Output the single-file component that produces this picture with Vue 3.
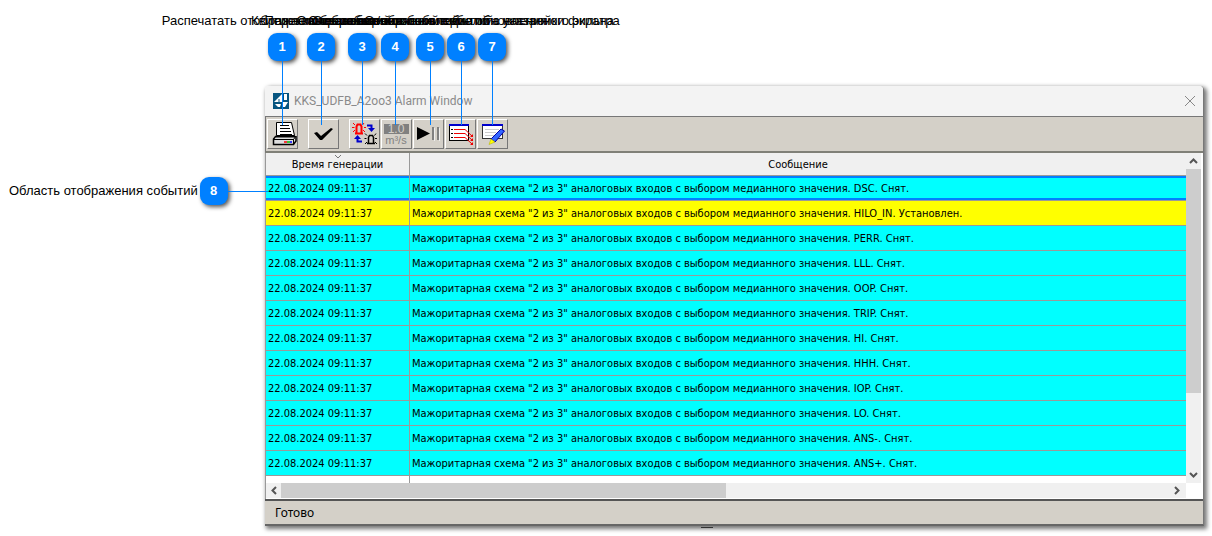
<script setup>
const message = 'Мажоритарная схема "2 из 3" аналоговых входов с выбором медианного значения. '
const events = [
  'DSC. Снят.', 'HILO_IN. Установлен.', 'PERR. Снят.', 'LLL. Снят.', 'OOP. Снят.', 'TRIP. Снят.',
  'HI. Снят.', 'HHH. Снят.', 'IOP. Снят.', 'LO. Снят.', 'ANS-. Снят.', 'ANS+. Снят.',
].map((tail, i) => ({ time: '22.08.2024 09:11:37', text: message + tail, active: i === 1, selected: i === 0 }))

const callouts = [
  { x: 282, text: 'Распечатать отображаемые сообщения' },
  { x: 321, text: 'Квитирование событий' },
  { x: 362, text: 'Переключение списков событий' },
  { x: 395, text: 'Отображение значений событий' },
  { x: 430, text: 'Остановка/возобновление обновления' },
  { x: 461, text: 'Отображение только событий с указанного экрана' },
  { x: 492, text: 'Отображение диалога настройки фильтра' },
]
</script>

<template>
  <main class="page">
    <section class="window">
      <header class="title">
        <svg class="logo" width="16" height="16" viewBox="0 0 16 16">
          <rect width="16" height="16" fill="#075580" />
          <path d="M1 9L9 1V9ZM11 1H14V7H11ZM2 11H8L7 14H5ZM9 9H15L12 14H9Z" fill="#fff" />
          <path d="M6 9V6" stroke="#075580" />
        </svg>
        <h1>KKS_UDFB_A2oo3 Alarm Window</h1>
        <button class="close" aria-label="Закрыть">
          <svg width="12" height="12" viewBox="0 0 12 12"><path d="M1 1L11 11M11 1L1 11" stroke="#888" /></svg>
        </button>
      </header>

      <nav class="toolbar">
        <button class="tool" aria-label="Печать">
          <svg viewBox="0 0 31 30">
            <path d="M9.500 3.500H24.500L27.500 16.500H9.500Z" fill="#fff" stroke="#000" />
            <path d="M13 6.500H22M13 9.500H23M13 12.500H24M13 15.500H25" stroke="#000" />
            <path d="M9 17L6.500 20V25.500H26.500L29 22V17" fill="#ddd" stroke="#000" stroke-width="1.500" />
            <path d="M7 20.500H26.500L29 17M26.500 20V25" stroke="#000" fill="none" />
            <path d="M9 17.500H28" stroke="#000" stroke-width="2" />
            <path d="M17 23H20" stroke="#f00" stroke-width="1.500" /><path d="M20 23H23" stroke="#0b0" stroke-width="1.500" /><path d="M23 23H25" stroke="#00f" stroke-width="1.500" />
          </svg>
        </button>
        <button class="tool apart" aria-label="Квитировать">
          <svg viewBox="0 0 31 30"><path d="M6 14L9 13L13 17L23 9L25 10L14 21H12Z" fill="#000" /></svg>
        </button>
        <button class="tool apart" aria-label="Переключить список">
          <svg viewBox="0 0 31 30" fill="none">
            <path d="M7.500 14V7.500L8.500 5.500H11.500L12.500 7.500V14M6 14.500H14" stroke="#f00" stroke-width="2" />
            <path d="M4 4L6 6M15 4L13.500 6M3 8.500H5.500M15 8.500H17M4 13L6 11M16 13L14 11" stroke="#f00" />
            <path d="M19.500 24V18.500L20.500 16.500H23.500L24.500 18.500V24M18 24.500H26" stroke="#000" stroke-width="1.500" />
            <path d="M16 14.500L18 16.500M27 14.500L25.500 16.500M15.500 19.500H17.500M26 19.500H28M16 25L18 23M28 25L26 23" stroke="#000" />
            <path d="M18 6.500H22.500V10M8.500 19V22.500H13" stroke="#00c" stroke-width="2" />
            <path d="M19 9H26L22.500 13ZM5 20L8.500 16L12 20Z" fill="#00c" />
          </svg>
        </button>
        <button class="tool" aria-label="Значения">
          <svg viewBox="0 0 31 30">
            <rect x="3" y="5" width="25" height="10" fill="#808080" />
            <text x="15" y="14" class="num">1.0</text>
            <text x="15" y="25" class="unit">m³/s</text>
          </svg>
        </button>
        <button class="tool" aria-label="Пауза">
          <svg viewBox="0 0 31 30">
            <path d="M4 8L17 14.500L4 21Z" fill="#000" />
            <path d="M20 8V21M25 8V21" stroke="#808080" stroke-width="2" />
            <path d="M21.500 9V22M26.500 9V22" stroke="#eee" />
          </svg>
        </button>
        <button class="tool" aria-label="Настройка вывода">
          <svg viewBox="0 0 31 30">
            <rect x="4.500" y="5.500" width="19" height="16" fill="#fff" stroke="#000" />
            <path d="M4 6H24" stroke="#00c" stroke-width="2" />
            <path d="M6 10.500H8M6 14.500H8M6 18.500H8" stroke="#000" />
            <path d="M9 10.500H20L27 17M9 14.500H20L27 21M9 18.500H20L27 25" fill="none" stroke="#e00" />
            <path d="M28 15V18H25ZM28 19V22H25ZM28 23V26H25Z" fill="#e00" />
          </svg>
        </button>
        <button class="tool" aria-label="Настройка фильтра">
          <svg viewBox="0 0 31 30">
            <rect x="5.500" y="6.500" width="20" height="13" fill="#fff" stroke="#333" />
            <path d="M5 6H26" stroke="#00c" stroke-width="2" />
            <path d="M8 10.500H22M8 13.500H19M8 16.500H17" stroke="#ccc" />
            <path d="M24 10L27.500 12L18 23L14 20Z" fill="#36f" stroke="#00a" />
            <path d="M14 20L18 23L12 25.500Z" fill="#ff0" stroke="#aa0" stroke-width="0.500" />
          </svg>
        </button>
      </nav>

      <div class="view">
        <div class="grid">
          <table>
            <thead>
              <tr>
                <th class="time">
                  <svg class="sort" width="8" height="5" viewBox="0 0 8 5"><path d="M1 1L4 4L7 1" fill="none" stroke="#777" /></svg>
                  Время генерации
                </th>
                <th>Сообщение</th>
              </tr>
            </thead>
            <tbody>
              <tr v-for="e in events" :key="e.text" :class="{ active: e.active, selected: e.selected }">
                <td class="time">{{ e.time }}</td>
                <td>{{ e.text }}</td>
              </tr>
              <tr class="rest"><td class="time"></td><td></td></tr>
            </tbody>
          </table>
        </div>
        <div class="vbar">
          <svg width="15" height="16" viewBox="0 0 15 16"><path d="M4 10L7.500 6.500L11 10" class="chevron" /></svg>
          <div class="vtrack"><div class="vthumb"></div></div>
          <svg width="15" height="16" viewBox="0 0 15 16"><path d="M4 6L7.500 9.500L11 6" class="chevron" /></svg>
        </div>
        <div class="hbar">
          <svg width="15" height="15" viewBox="0 0 15 15"><path d="M10 4L6.500 7.500L10 11" class="chevron" /></svg>
          <div class="htrack"><div class="hthumb"></div></div>
          <svg width="16" height="15" viewBox="0 0 16 15"><path d="M5 4L8.500 7.500L5 11" class="chevron" /></svg>
        </div>
      </div>
      <footer class="status">Готово</footer>
    </section>

    <div v-for="(c, i) in callouts" :key="i" class="callout" :style="{ left: c.x + 'px' }">
      <span class="label">{{ c.text }}</span>
      <span class="badge">{{ i + 1 }}</span>
      <i class="stem"></i>
    </div>
    <div class="side">
      <span class="label">Область отображения событий</span>
      <span class="badge">8</span>
      <i class="lead"></i>
    </div>
    <i class="mark"></i>
  </main>
</template>

<style>
body { background: #fff; }
</style>

<style scoped>
.page {
  position: relative;
  padding: 86px 8px 11px 265px;
  font-family: "Liberation Sans", Arial, sans-serif;
  color: #000;
}
.window {
  border-right: 1px solid #777;
  border-bottom: 2px solid #666;
  box-shadow: 2px 2px 4px 1px #777;
  border-radius: 4px 4px 0 0;
}
.title {
  display: flex;
  align-items: center;
  height: 30px;
  padding: 0 7px 0 8px;
  background: #f3f3f3;
  border-radius: 4px 4px 0 0;
  box-sizing: border-box;
}
.title h1 {
  flex: 1;
  margin: 0 0 0 5px;
  font: 400 12px Roboto, "Noto Sans", sans-serif;
  color: #8a8a8a;
}
.close {
  padding: 0;
  border: 0;
  background: none;
  line-height: 0;
}
.toolbar {
  display: flex;
  gap: 1px;
  height: 37px;
  padding: 2px 1px;
  box-sizing: border-box;
  border-top: 1px solid #777;
  border-bottom: 2px solid #808078;
  border-left: 1px solid #777;
  background: #d4d0c8;
}
.tool {
  width: 31px;
  height: 30px;
  padding: 0;
  border: 1px solid;
  border-color: #fff #777 #777 #fff;
  background: #d4d0c8;
  line-height: 0;
}
.tool svg {
  width: 31px;
  height: 30px;
  margin: -1px;
}
.apart { margin-left: 9px; }
.num, .unit {
  font-family: "Liberation Sans", sans-serif;
  text-anchor: middle;
}
.num { font-size: 12px; fill: #d4d0c8; }
.unit { font-size: 11px; fill: #808080; }
.view {
  display: grid;
  grid-template-columns: 1fr 15px;
  padding: 0 2px 1px 0;
  border-left: 1px solid #999;
  background: #fff;
}
.grid { overflow: hidden; }
table {
  width: 100%;
  table-layout: fixed;
  border-collapse: separate;
  border-spacing: 0;
  font: 11px "DejaVu Sans Condensed", Tahoma, sans-serif;
}
th, td {
  height: 25px;
  padding: 2px 2px 0;
  box-sizing: border-box;
  border-bottom: 1px solid #999;
  line-height: 14px;
  white-space: nowrap;
  text-align: left;
}
th {
  position: relative;
  height: 23px;
  background: #f0f0f0;
  font-weight: 400;
  text-align: center;
}
.time {
  width: 144px;
  border-right: 1px solid #999;
}
.sort {
  position: absolute;
  top: 1px;
  left: 68px;
}
td { background: #0ff; }
.active td { background: #ff0; }
.selected td { box-shadow: inset 0 2px #0080ff, inset 0 -2px #0080ff; }
.rest td { height: 7px; padding: 0; border-bottom: 0; background: #fff; }
.vbar {
  display: flex;
  flex-direction: column;
  background: #f0f0f0;
}
.vtrack { flex: 1; }
.vthumb { height: 75%; background: #cdcdcd; }
.hbar {
  display: flex;
  height: 15px;
  background: #f0f0f0;
}
.htrack { flex: 1; }
.hthumb { width: 50%; height: 100%; background: #cdcdcd; }
.chevron { fill: none; stroke: #555; stroke-width: 2; }
.status {
  height: 23px;
  padding-left: 10px;
  border-top: 2px solid #555;
  background: #d4d0c8;
  font: 12px/24px "Noto Sans", sans-serif;
}
.callout {
  position: absolute;
  top: 13px;
  display: flex;
  flex-direction: column;
  align-items: center;
  width: 0;
}
.label {
  font-size: 13px;
  line-height: 16px;
  white-space: nowrap;
}
.badge {
  flex: none;
  width: 28px;
  height: 28px;
  border-radius: 9px;
  background: #0080ff;
  box-shadow: 2px 2px 4px #555;
  color: #fff;
  font-size: 13px;
  font-weight: 700;
  line-height: 28px;
  text-align: center;
}
.callout .badge { margin-top: 4px; }
.stem {
  flex: none;
  width: 1px;
  height: 64px;
  background: #0080ff;
}
.side {
  position: absolute;
  top: 177px;
  left: 9px;
  display: flex;
  align-items: center;
}
.side .badge { margin-left: 2px; }
.lead {
  width: 40px;
  height: 1px;
  background: #0080ff;
}
.mark {
  position: absolute;
  bottom: 9px;
  left: 701px;
  width: 12px;
  height: 1px;
  background: #333;
}
</style>
